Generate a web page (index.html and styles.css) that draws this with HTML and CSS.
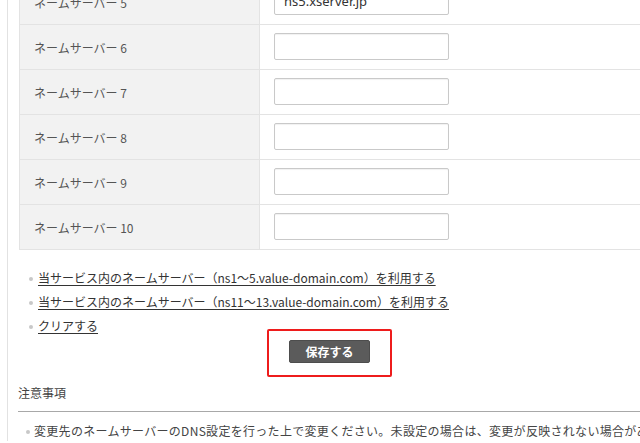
FILE: index.html
```html
<!DOCTYPE html>
<html lang="ja">
<head>
<meta charset="utf-8">
<link rel="stylesheet" href="styles.css">
</head>
<body>
<div class="page">
  <table class="ns-table">
    <tr><th>ネームサーバー 5</th><td><input class="ns-input" type="text" value="ns5.xserver.jp"></td></tr>
    <tr><th>ネームサーバー 6</th><td><input class="ns-input" type="text"></td></tr>
    <tr><th>ネームサーバー 7</th><td><input class="ns-input" type="text"></td></tr>
    <tr><th>ネームサーバー 8</th><td><input class="ns-input" type="text"></td></tr>
    <tr><th>ネームサーバー 9</th><td><input class="ns-input" type="text"></td></tr>
    <tr><th>ネームサーバー 10</th><td><input class="ns-input" type="text"></td></tr>
  </table>
  <ul class="links">
    <li><a href="#">当サービス内のネームサーバー（ns1～5.value-domain.com）を利用する</a></li>
    <li><a href="#">当サービス内のネームサーバー（ns11～13.value-domain.com）を利用する</a></li>
    <li><a href="#">クリアする</a></li>
  </ul>
  <div class="actions">
    <button class="save-btn" type="button">保存する</button>
  </div>
  <div class="notice">
    <div class="notice-title">注意事項</div>
    <ul class="notice-list">
      <li>変更先のネームサーバーのDNS設定を行った上で変更ください。未設定の場合は、変更が反映されない場合があります。</li>
    </ul>
  </div>
</div>
</body>
</html>
```
FILE: styles.css
```css
html, body {
  margin: 0;
  padding: 0;
  background: #fff;
  overflow: hidden;
}
body {
  font-family: "Noto Sans CJK JP", "Noto Sans", sans-serif;
  font-size: 12px;
  color: #444;
}
.page {
  margin-left: 7px;
  border-left: 1px solid #e2e2e2;
  padding-left: 10px;
  min-height: 443px;
  width: 700px;
}
.ns-table {
  border-collapse: collapse;
  margin-top: -21px;
  margin-left: 1px;
  width: 640px;
}
.ns-table th,
.ns-table td {
  height: 44px;
  padding: 0;
  border-top: 1px solid #e3e3e3;
  border-bottom: 1px solid #e3e3e3;
}
.ns-table th {
  width: 240px;
  background: #f2f2f2;
  border-left: 1px solid #e3e3e3;
  border-right: 1px solid #e3e3e3;
  text-align: left;
  font-weight: normal;
  color: #555;
  padding-left: 14px;
  box-sizing: border-box;
}
.ns-table td {
  padding-left: 14px;
}
.ns-input {
  display: block;
  box-sizing: border-box;
  width: 175px;
  height: 27px;
  margin-top: -2px;
  border: 1px solid #c9c9c9;
  border-radius: 2px;
  box-shadow: inset 0 1px 1px rgba(0,0,0,0.06);
  padding: 0 9px;
  font-family: "Noto Sans", "Noto Sans CJK JP", sans-serif;
  font-size: 13px;
  color: #333;
  background: #fff;
}
.links {
  list-style: none;
  margin: 16px 0 0 0;
  padding: 0 0 0 11px;
}
.links li {
  line-height: 24px;
  position: relative;
  padding-left: 9px;
}
.links li::before,
.notice-list li::before {
  content: "";
  position: absolute;
  left: 0;
  top: 50%;
  width: 4px;
  height: 4px;
  margin-top: -1px;
  border-radius: 50%;
  background: #c8c8c8;
}
.links a {
  color: #333;
  text-decoration: underline;
  text-underline-offset: 2px;
}
.actions {
  display: flex;
  justify-content: center;
  width: 623px;
  margin-top: 2px;
}
.save-btn {
  position: relative;
  width: 81px;
  height: 23px;
  border: 1px solid #4d4d4d;
  border-radius: 2px;
  background: #5b5b5b;
  color: #fff;
  font-family: "Noto Sans CJK JP", sans-serif;
  font-size: 12px;
  font-weight: bold;
  padding: 0;
  line-height: 20px;
}
.save-btn::after {
  content: "";
  position: absolute;
  left: -23px;
  right: -23px;
  top: -12px;
  bottom: -15px;
  border: 2px solid #ee1c1c;
  border-radius: 2px;
  pointer-events: none;
}
.notice {
  margin-top: 20px;
}
.notice-title {
  line-height: 20px;
  color: #444;
}
.notice-list {
  list-style: none;
  margin: 8px 0 0 0;
  padding: 9px 0 0 8px;
  border-top: 1px solid #a8a8a8;
  width: 623px;
  white-space: nowrap;
}
.notice-list li {
  position: relative;
  padding-left: 8px;
  line-height: 20px;
  letter-spacing: 0.3px;
}
```
